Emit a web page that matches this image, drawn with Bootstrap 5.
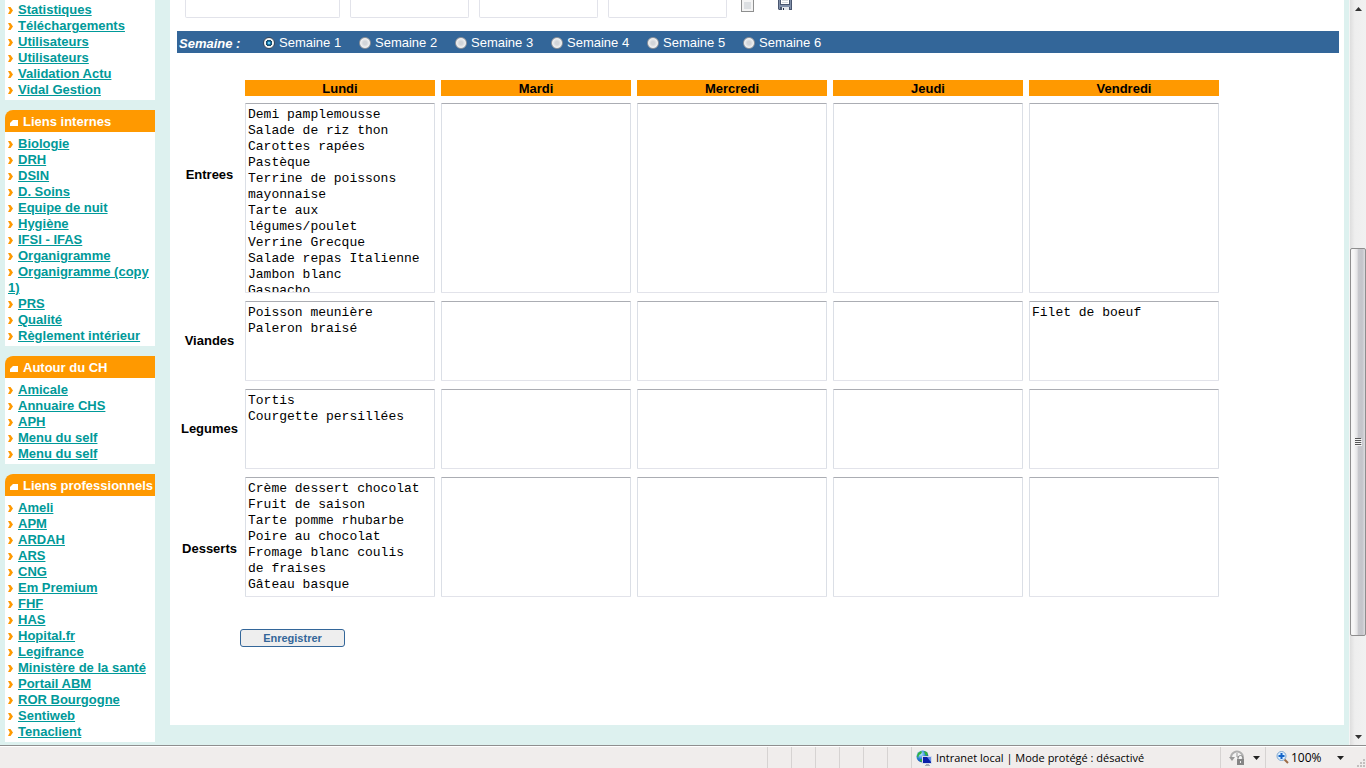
<!DOCTYPE html>
<html lang="fr">
<head>
<meta charset="utf-8">
<meta name="viewport" content="width=device-width, initial-scale=1">
<title>Intranet - Menu du self</title>
<link href="https://cdn.jsdelivr.net/npm/bootstrap@5.3.0/dist/css/bootstrap.min.css" rel="stylesheet">
<style>
body{font:13px/16px "Liberation Sans",Arial,sans-serif;color:#000;background:#ddf1ef}
.page-view{min-height:0}
.side-nav{width:155px;padding-left:5px}
.side-block{margin-bottom:10px}
.side-block h2{height:22px;margin:0;padding-left:5px;background:#f90;color:#fff;font-size:13px;line-height:24px;font-weight:700;border-top-left-radius:8px;white-space:nowrap}
.side-block h2 svg{width:8px;height:6px;margin-right:5px;vertical-align:0}
.side-block ul{background:#fff;padding:4px 0 2px 3px;margin:0;list-style:none}
.side-block.cut-top ul{padding-top:2px}
.side-block a{color:#099;font-weight:700;text-decoration:underline}
.side-block li svg{width:5px;height:7px;margin-right:5px;vertical-align:0}
.content-pane{background:#fff;margin:0 5px 20px 15px;padding:0 5px 0 7px;min-width:0}
.top-fields{gap:10px;padding-left:8px;height:31px}
.top-fields input[type=text]{width:119px;height:18px;border:1px solid #e2e3ea;border-top:0;border-radius:0 0 2px 2px;padding:0 3px}
.top-fields input.wide-field{width:155px}
.top-fields input[type=checkbox]{appearance:none;width:13px;height:12px;margin:0 0 0 4px;border:1px solid #8e8f8f;border-top:0;background:#dcdfe2;box-shadow:inset 0 0 0 2px #f4f4f4}
.save-icon{border:0;background:none;padding:0;margin-left:14px;width:14px;height:11px;line-height:0}
.week-bar{background:#369;color:#fff;height:22px;line-height:24px;padding-left:2px}
.week-title{width:84px;font-weight:700;font-style:italic;padding-top:1px}
.week-bar label{width:96px;padding-top:2px}
.week-bar input{appearance:none;width:12px;height:12px;margin:0 4px 0 0;border-radius:50%;border:1px solid #8e9299;background:radial-gradient(circle,#d2d5d9 0 25%,#f6f6f6 70%)}
.week-bar input:checked{border-color:#39475a;background:radial-gradient(circle,#6ecbf0 0 10%,#1778ad 22%,#153e5b 42%,#f4f4f4 50%)}
.menu-grid{margin-top:27px;border-collapse:collapse}
.menu-grid th,.menu-grid td{padding:4px 3px;vertical-align:middle;text-align:center}
.menu-grid thead th,.menu-grid thead td{padding:0 3px 3px}
.menu-grid th[scope=row]{width:65px;padding:0}
.menu-grid .row-starters th[scope=row]{padding-bottom:46px}
.menu-grid .row-desserts th[scope=row]{padding-top:24px}
.day-name{width:190px;height:16px;line-height:18px;background:#f90}
.menu-grid textarea{display:block;width:190px;height:80px;margin:0;padding:3px 10px 0 2px;border:1px solid #e2e3ea;border-top-color:#abadb3;border-left-color:#dbdfe6;border-right-color:#dbdfe6;border-radius:1px;resize:none;overflow:hidden;font:13px/16px "Liberation Mono","Courier New",monospace;color:#000}
.menu-grid .row-starters textarea{height:190px}
.menu-grid .row-desserts textarea{height:120px}
.save-btn{width:105px;height:18px;margin:28px 0 0 63px;padding:0;font-size:11px;line-height:14px;font-weight:700;color:#369;background:#eee;border:1px solid #369;border-radius:3px}
.scroll-track{width:17px;border-left:1px solid #f4f4f4;background:linear-gradient(90deg,#dedede,#eee 30%,#f1f1f1)}
.scroll-up{flex:241 0 0;padding-top:7px}
.scroll-thumb{flex:386 0 0;border:1px solid #8e8e8e;border-radius:2px;background:linear-gradient(90deg,#f6f6f6 0 20%,#e2e2e4 45%,#c8c9cd 50%,#c4c4ca 80%,#dcdcdf)}
.scroll-down{flex:103 0 0;padding-bottom:6px}
.scroll-track svg{display:block}
.status-strip{height:23px;border-top:1px solid #8f8f8f;box-shadow:inset 0 1px #fff;background:#f0edec;font:12px/22px "Open Sans","Segoe UI",sans-serif}
.status-strip>div{border-left:1px solid #d6d3d2;margin-top:1px;white-space:nowrap}
.slot{width:24px}
.zone{width:309px;padding-left:4px;font-size:11px}
.zone svg{margin-right:4px}
.guard{width:45px;padding-left:8px}
.zoom-level{width:101px;padding-left:10px}
.zoom-value{margin:0 15px 0 2px}
</style>
</head>
<body>
<svg class="d-none" aria-hidden="true">
  <symbol id="chev" viewBox="0 0 5 7"><path d="M0 0h2.500L5 3.500 2.500 7H0l1.800-3.500z" fill="#f90"/></symbol>
  <symbol id="tab" viewBox="0 0 8 6"><path d="M0 6V3l3-3h5v6z" fill="#fff"/></symbol>
</svg>
<div class="vh-100 d-flex flex-column overflow-hidden">
  <div class="page-view d-flex flex-grow-1 overflow-hidden">
    <nav class="side-nav flex-shrink-0">
      <section class="side-block cut-top"><ul id="list-admin"></ul></section>
      <section class="side-block"><h2><svg><use href="#tab"/></svg>Liens internes</h2><ul id="list-internes"></ul></section>
      <section class="side-block"><h2><svg><use href="#tab"/></svg>Autour du CH</h2><ul id="list-autour"></ul></section>
      <section class="side-block"><h2><svg><use href="#tab"/></svg>Liens professionnels</h2><ul id="list-pro"></ul></section>
    </nav>
    <main class="content-pane flex-grow-1">
      <form>
        <div class="top-fields d-flex align-items-start">
          <input type="text" class="wide-field" aria-label="Champ 1">
          <input type="text" aria-label="Champ 2">
          <input type="text" aria-label="Champ 3">
          <input type="text" aria-label="Champ 4">
          <input type="checkbox" aria-label="Sélection">
          <button type="button" class="save-icon" aria-label="Sauvegarder"><svg width="14" height="11" viewBox="0 0 14 11"><path d="M0 0h14v10H1L0 9z" fill="#49566f"/><path d="M1 0h1v9H1zM12 0h1v9h-1z" fill="#8190aa"/><path d="M3 0h8v4H3z" fill="#fff"/><path d="M4 0h6v1H4zM4 2h6v1H4z" fill="#d4d8dd"/><path d="M2 5h10v2H2z" fill="#8190aa"/><path d="M4 7h7v3H4z" fill="#e6e9ee"/><path d="M5 8h1v2H5z" fill="#222d3f"/></svg></button>
        </div>
        <div class="week-bar d-flex">
          <span class="week-title">Semaine :</span>
          <label class="d-flex align-items-center"><input type="radio" name="semaine" checked>Semaine 1</label>
          <label class="d-flex align-items-center"><input type="radio" name="semaine">Semaine 2</label>
          <label class="d-flex align-items-center"><input type="radio" name="semaine">Semaine 3</label>
          <label class="d-flex align-items-center"><input type="radio" name="semaine">Semaine 4</label>
          <label class="d-flex align-items-center"><input type="radio" name="semaine">Semaine 5</label>
          <label class="d-flex align-items-center"><input type="radio" name="semaine">Semaine 6</label>
        </div>
        <table class="menu-grid">
          <thead><tr><td></td>
            <th scope="col"><div class="day-name">Lundi</div></th><th scope="col"><div class="day-name">Mardi</div></th><th scope="col"><div class="day-name">Mercredi</div></th><th scope="col"><div class="day-name">Jeudi</div></th><th scope="col"><div class="day-name">Vendredi</div></th></tr></thead>
          <tbody>
            <tr class="row-starters"><th scope="row">Entrees</th>
              <td><textarea aria-label="Entrees lundi">Demi pamplemousse
Salade de riz thon
Carottes rapées
Pastèque
Terrine de poissons mayonnaise
Tarte aux légumes/poulet
Verrine Grecque
Salade repas Italienne
Jambon blanc
Gaspacho</textarea></td>
              <td><textarea aria-label="Entrees mardi"></textarea></td><td><textarea aria-label="Entrees mercredi"></textarea></td><td><textarea aria-label="Entrees jeudi"></textarea></td><td><textarea aria-label="Entrees vendredi"></textarea></td></tr>
            <tr><th scope="row">Viandes</th>
              <td><textarea aria-label="Viandes lundi">Poisson meunière
Paleron braisé</textarea></td>
              <td><textarea aria-label="Viandes mardi"></textarea></td><td><textarea aria-label="Viandes mercredi"></textarea></td><td><textarea aria-label="Viandes jeudi"></textarea></td><td><textarea aria-label="Viandes vendredi">Filet de boeuf</textarea></td></tr>
            <tr><th scope="row">Legumes</th>
              <td><textarea aria-label="Legumes lundi">Tortis
Courgette persillées</textarea></td>
              <td><textarea aria-label="Legumes mardi"></textarea></td><td><textarea aria-label="Legumes mercredi"></textarea></td><td><textarea aria-label="Legumes jeudi"></textarea></td><td><textarea aria-label="Legumes vendredi"></textarea></td></tr>
            <tr class="row-desserts"><th scope="row">Desserts</th>
              <td><textarea aria-label="Desserts lundi">Crème dessert chocolat
Fruit de saison
Tarte pomme rhubarbe
Poire au chocolat
Fromage blanc coulis de fraises
Gâteau basque</textarea></td>
              <td><textarea aria-label="Desserts mardi"></textarea></td><td><textarea aria-label="Desserts mercredi"></textarea></td><td><textarea aria-label="Desserts jeudi"></textarea></td><td><textarea aria-label="Desserts vendredi"></textarea></td></tr>
          </tbody>
        </table>
        <button type="button" class="save-btn d-block">Enregistrer</button>
      </form>
    </main>
    <div class="scroll-track d-flex flex-column flex-shrink-0">
      <div class="scroll-up d-flex justify-content-center"><svg width="7" height="4"><path d="M3.5 0L7 4H0z" fill="#333"/></svg></div>
      <div class="scroll-thumb d-flex align-items-center justify-content-center"><svg width="8" height="8"><path d="M1 0h6v1H1zM1 2h6v1H1zM1 4h6v1H1zM1 6h6v1H1z" fill="#555"/><path d="M1 1h7v1H1zM1 3h7v1H1zM1 5h7v1H1zM1 7h7v1H1z" fill="#f4f4f4"/></svg></div>
      <div class="scroll-down d-flex justify-content-center align-items-end"><svg width="7" height="4"><path d="M3.5 4L0 0h7z" fill="#333"/></svg></div>
    </div>
  </div>
  <footer class="status-strip d-flex justify-content-end flex-shrink-0">
    <div class="slot"></div><div class="slot"></div><div class="slot"></div><div class="slot"></div><div class="slot"></div><div class="slot"></div>
    <div class="zone d-flex align-items-center"><svg width="16" height="16" viewBox="0 0 16 16"><defs><radialGradient id="globe" cx=".35" cy=".3" r=".8"><stop offset="0" stop-color="#c5f0ff"/><stop offset=".5" stop-color="#2a83d6"/><stop offset="1" stop-color="#0c3a9c"/></radialGradient></defs><circle cx="6.500" cy="6.500" r="6" fill="url(#globe)"/><path d="M2 3l3-2 1 1-1 2-2 1-1 3-1-2zM8 1l3 1 1 3-2 1-1-2zM4 9l3 1-1 2-2-1z" fill="#32b43c"/><path d="M6 6h10v8H6z" fill="#d5dbe6"/><path d="M7 7h8v6H7z" fill="#0a1fa8"/><path d="M11 7h4v5z" fill="#638be8"/><path d="M10 14h3v1h1v1H9v-1h1z" fill="#a7adb8"/></svg>Intranet local | Mode protégé : désactivé</div>
    <div class="guard d-flex align-items-center"><svg width="16" height="16" viewBox="0 0 16 16"><path d="M2 7a6 6 0 1 1 10 5" fill="#f4f4f4" stroke="#b0b0b0" stroke-width="2"/><path d="M0 7h6L3 11z" fill="#999"/><path d="M8 3v4h2" fill="none" stroke="#999"/><path d="M9 9V8a2 2 0 0 1 5 0v1" fill="none" stroke="#8a8a8a"/><path d="M8 9h7v6H8z" fill="#858585"/><path d="M11 11h1v2h-1z" fill="#eee"/></svg><svg class="ms-2" width="7" height="4"><path d="M0 0h7L3.500 4z" fill="#222"/></svg></div>
    <div class="zoom-level d-flex align-items-center"><svg width="13" height="13" viewBox="0 0 13 13"><path d="M8 8l4 4" stroke="#9c6b45" stroke-width="2"/><circle cx="5.500" cy="5" r="4.500" fill="#d9edff" stroke="#7fa6cd"/><path d="M4.500 2h2v2h2v2h-2v2h-2V6h-2V4h2z" fill="#1565c8"/></svg><span class="zoom-value">100%</span><svg width="7" height="4"><path d="M0 0h7L3.500 4z" fill="#222"/></svg><svg class="ms-auto align-self-end" width="10" height="10"><path d="M7 1h2v2H7zM4 4h2v2H4zM7 4h2v2H7zM1 7h2v2H1zM4 7h2v2H4zM7 7h2v2H7z" fill="#c2bfbe"/></svg></div>
  </footer>
</div>
<script src="https://cdn.jsdelivr.net/npm/bootstrap@5.3.0/dist/js/bootstrap.bundle.min.js"></script>
<script>
const links = {
  "list-admin": ["Statistiques","Téléchargements","Utilisateurs","Utilisateurs","Validation Actu","Vidal Gestion"],
  "list-internes": ["Biologie","DRH","DSIN","D. Soins","Equipe de nuit","Hygiène","IFSI - IFAS","Organigramme","Organigramme (copy 1)","PRS","Qualité","Règlement intérieur"],
  "list-autour": ["Amicale","Annuaire CHS","APH","Menu du self","Menu du self"],
  "list-pro": ["Ameli","APM","ARDAH","ARS","CNG","Em Premium","FHF","HAS","Hopital.fr","Legifrance","Ministère de la santé","Portail ABM","ROR Bourgogne","Sentiweb","Tenaclient"]
};
for (const [id, names] of Object.entries(links)) {
  document.getElementById(id).innerHTML = names.map(n => `<li><svg><use href="#chev"/></svg><a href="#">${n}</a></li>`).join("");
}
</script>
</body>
</html>
